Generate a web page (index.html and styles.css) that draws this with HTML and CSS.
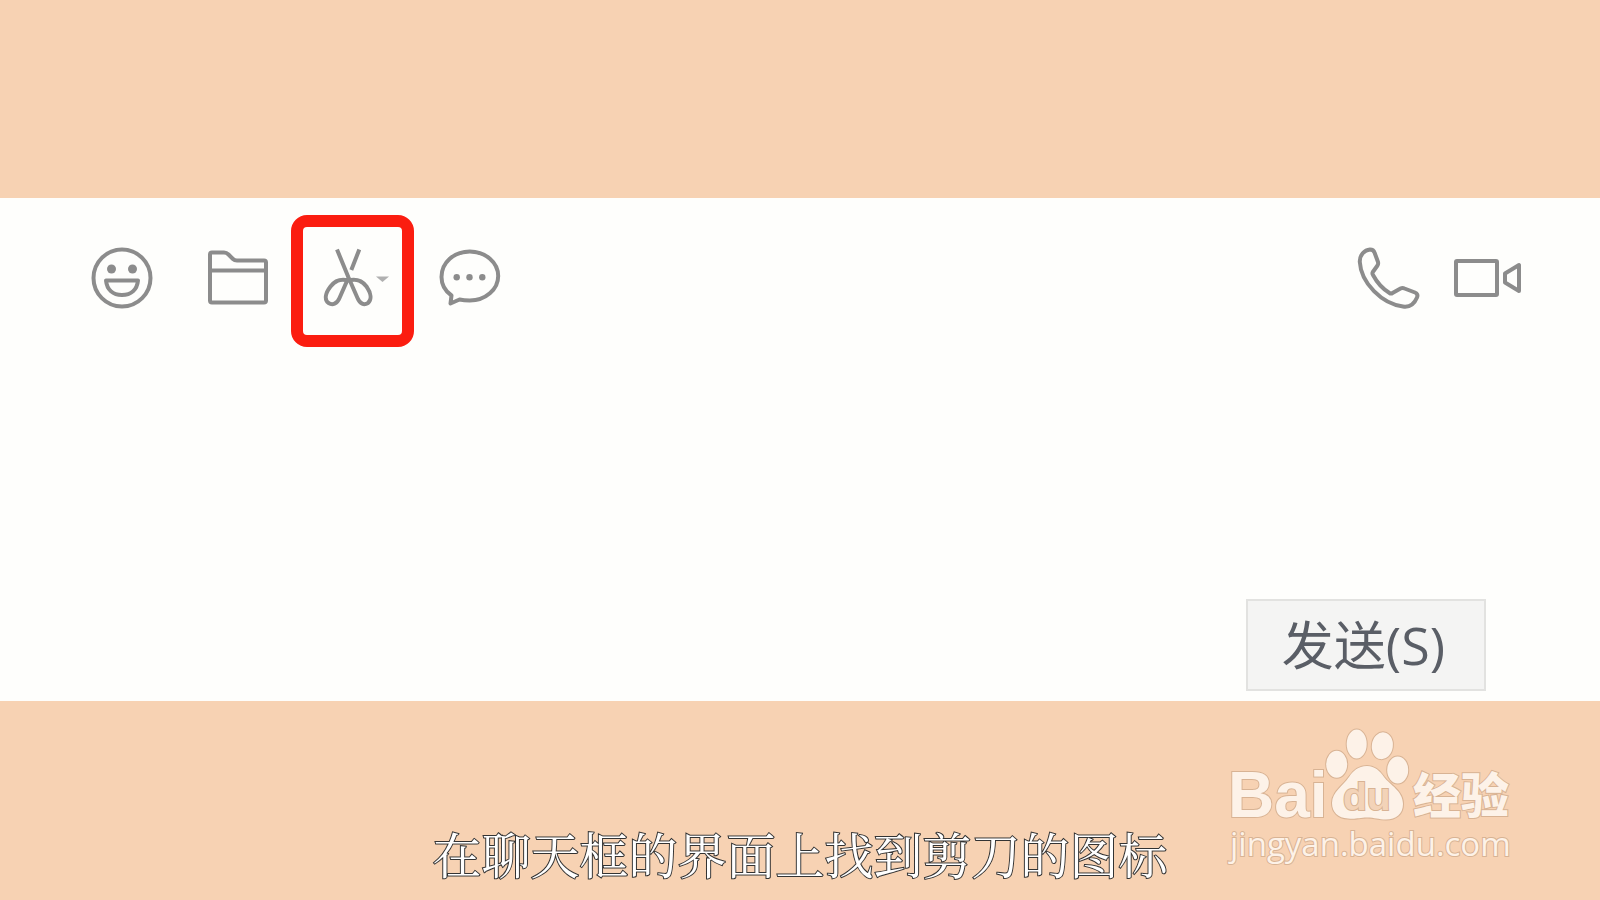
FILE: index.html
```
<!DOCTYPE html>
<html lang="zh-CN">
<head>
  <meta charset="UTF-8">
  <meta name="viewport" content="width=device-width, initial-scale=1.0">
  <link rel="stylesheet" href="styles.css">
  <title>聊天框</title>
</head>
<body>
  <main class="chat-box">
    <div class="toolbar">
      <button class="tool" type="button" aria-label="表情">
        <svg class="icon" viewBox="0 0 68 68">
          <circle cx="34" cy="34" r="28.5"/>
          <circle class="solid" cx="23.5" cy="25" r="4.5"/>
          <circle class="solid" cx="44.5" cy="25" r="4.5"/>
          <path d="M18 36.5H50C49 46 43 51 34 51S19 46 18 36.5Z"/>
        </svg>
      </button>
      <button class="tool" type="button" aria-label="文件">
        <svg class="icon" viewBox="0 0 68 68">
          <path d="M8 8.5H20Q22.500 8.500 24.500 10.500L29 15Q30.500 16.500 33 16.500H60Q62 16.500 62 18.500V56.500Q62 58.500 60 58.500H8Q6 58.500 6 56.500V10.500Q6 8.500 8 8.500ZM6 26.500H62"/>
        </svg>
      </button>
      <button class="tool marked" type="button" aria-label="截图">
        <svg class="icon" viewBox="0 0 68 68">
          <path d="M17 5.500L28.300 33L37.500 54C40 60 44 61.500 48 59C52 55.500 51 49 46.500 42.500C42 36.500 37 34.500 28.300 36.500C20 34.500 15 36.500 10.500 42.500C5.500 49 4 55.500 8.500 59C12.500 61.500 17 60 19.500 54L28.300 34M39.300 5.500L31.300 26"/>
          <path class="caret" d="M56 32.500H69L62.500 38Z"/>
        </svg>
      </button>
      <button class="tool" type="button" aria-label="聊天记录">
        <svg class="icon" viewBox="0 0 68 68">
          <path d="M15.500 51.500C9 47 5.500 40.500 5.500 33C5.500 18.500 18 7.500 33.800 7.500S62.200 18.500 62.200 32S49.500 56.500 33.800 56.500Q28 56.500 23.500 55.500L14.500 59.500Z"/>
          <circle class="solid" cx="20.700" cy="33.300" r="3.200"/>
          <circle class="solid" cx="33.500" cy="33.300" r="3.200"/>
          <circle class="solid" cx="46.300" cy="33.300" r="3.200"/>
        </svg>
      </button>
      <div class="calls">
        <button class="tool" type="button" aria-label="语音通话">
          <svg class="icon" viewBox="0 0 68 68">
            <path d="M16 5.500Q19.500 5.500 20.500 8.500L24 18Q24.500 20 23.500 21.500L18.800 28Q18 29.500 19 31C23 38.500 29 45 35.500 49Q37 50 38.500 49L46.500 44.500Q48.500 43.500 50.500 44.500L61 48.500Q64.500 50 63 53.500C60.500 59.500 56 63.500 49 62.500C28 60 7 39 5.800 18C5.500 11 10.500 6 16 5.500Z"/>
          </svg>
        </button>
        <button class="tool" type="button" aria-label="视频通话">
          <svg class="icon" viewBox="0 0 68 68">
            <rect x="2" y="17" width="41" height="34" rx="1"/>
            <path d="M51 29.500L65 21V47L51 38.500Z"/>
          </svg>
        </button>
      </div>
    </div>
    <textarea class="message" aria-label="消息"></textarea>
    <div class="actions">
      <button class="send" type="button">发送(S)</button>
    </div>
  </main>
  <footer class="bottom">
    <p class="subtitle">在聊天框的界面上找到剪刀的图标</p>
    <svg class="watermark" viewBox="0 0 288 160" role="img" aria-label="Baidu经验">
      <text class="brand" x="2" y="97">Bai</text>
      <ellipse cx="110.700" cy="44.300" rx="10.500" ry="13.500"/>
      <ellipse cx="130.700" cy="24" rx="10" ry="14.500"/>
      <ellipse cx="156.300" cy="25.700" rx="10.500" ry="13.500" transform="rotate(8 156 26)"/>
      <ellipse cx="171.700" cy="50" rx="10.500" ry="13.500"/>
      <path d="M141 46C149 46 154 51 158 57C164 65 177 71 177 84C177 94 170 99.500 160 99.500C152 99.500 149 97.500 141 97.500S130 99.500 122 98.500C112 98 106 92 106 83C106 72 117 66 123 57C127 51 132 46 141 46Z"/>
      <text class="du" x="117" y="90">du</text>
      <text class="jingyan" x="187" y="93">经验</text>
      <text class="site" x="4" y="136">jingyan.baidu.com</text>
    </svg>
  </footer>
</body>
</html>
```
FILE: styles.css
```
*,
*::after {
  box-sizing: border-box;
}

body {
  display: flex;
  flex-direction: column;
  min-height: 100vh;
  margin: 0;
  padding-top: 198px;
  font-family: "Open Sans", "Noto Sans CJK SC", sans-serif;
  background-color: #f7d2b3;
}

.chat-box {
  display: flex;
  flex: 1;
  flex-direction: column;
  background-color: #fefefc;
}

.toolbar {
  display: flex;
  gap: 48px;
  padding: 46px 78px 0 88px;
}

.calls {
  display: flex;
  gap: 32px;
  margin-left: auto;
}

.tool {
  position: relative;
  width: 68px;
  height: 68px;
  padding: 0;
  border: none;
  background: none;
  cursor: pointer;
}

.icon {
  display: block;
  width: 68px;
  height: 68px;
  overflow: visible;
  fill: none;
  stroke: #8c8c8c;
  stroke-width: 4;
  stroke-linejoin: round;
}

.icon .solid {
  fill: #8c8c8c;
  stroke: none;
}

.icon .caret {
  fill: #b0b0b0;
  stroke: none;
}

/* red frame round the scissors */
.marked::after {
  content: "";
  position: absolute;
  top: -29px;
  left: -29px;
  width: 123px;
  height: 132px;
  border: 12px solid #fb1d10;
  border-radius: 16px;
}

.message {
  flex: 1;
  width: 100%;
  padding: 16px 88px;
  border: none;
  outline: none;
  resize: none;
  background: none;
  font: inherit;
  font-size: 32px;
}

.actions {
  display: flex;
  justify-content: flex-end;
  padding: 0 114px 10px;
}

.send {
  padding: 0 39px 0 34px;
  border: 2px solid #e2e2e0;
  background-color: #f4f4f3;
  color: #5a5e66;
  font-family: "Open Sans", "Noto Sans CJK SC", sans-serif;
  font-size: 52px;
  font-weight: 400;
  line-height: 88px;
  cursor: pointer;
}

.bottom {
  display: grid;
  grid-template-columns: 1fr auto 1fr;
  padding: 19px 86px 20px;
}

.subtitle {
  grid-column: 2;
  align-self: end;
  margin: 0;
  padding-bottom: 2px;
  color: #fff;
  font-family: "Noto Serif CJK SC", "Noto Sans CJK SC", serif;
  font-size: 49px;
  font-weight: 400;
  line-height: 50px;
  paint-order: stroke;
  -webkit-text-stroke: 2px #333;
}

.watermark {
  justify-self: end;
  width: 288px;
  height: 160px;
  overflow: visible;
  fill: #fdf2e8;
  stroke: #d8b394;
  stroke-width: 2;
  paint-order: stroke;
}

.brand {
  font-family: "Liberation Sans", sans-serif;
  font-size: 64px;
  font-weight: 700;
}

.du {
  font-family: "Liberation Sans", sans-serif;
  font-size: 39px;
  font-weight: 700;
  fill: #f3d3b8;
}

.jingyan {
  font-family: "Noto Sans CJK SC", sans-serif;
  font-size: 48px;
  font-weight: 900;
}

.site {
  font-size: 33px;
  font-weight: 500;
}
```
